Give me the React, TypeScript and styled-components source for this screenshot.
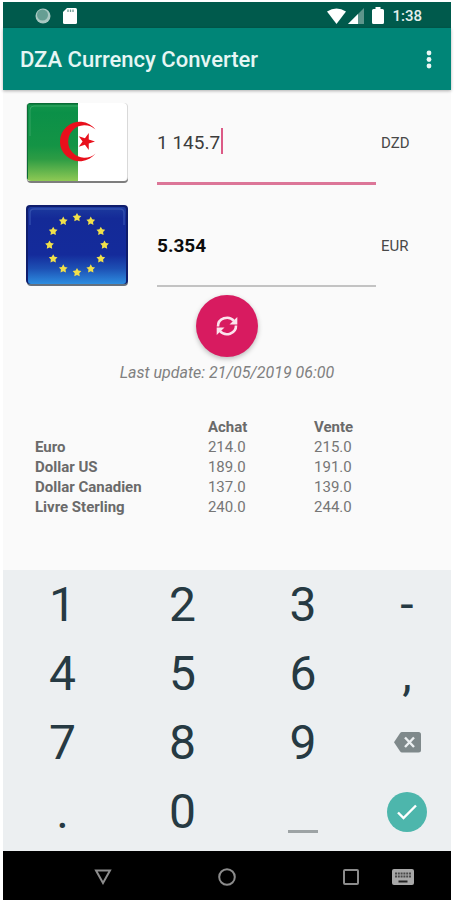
import React, { useState } from "react";
import styled, { createGlobalStyle } from "styled-components";

const GlobalStyle = createGlobalStyle`
  *, *::before, *::after { box-sizing: border-box; }
  html, body, #root { height: 100%; }
  body {
    margin: 0;
    background: #ffffff;
    font-family: Roboto, "Liberation Sans", sans-serif;
  }
  button, input { font-family: inherit; }
`;

const Screen = styled.div`
  display: flex;
  flex-direction: column;
  min-height: 100%;
  padding: 2px 3px 0;
`;

const StatusBar = styled.div`
  display: flex;
  align-items: center;
  justify-content: space-between;
  height: 26px;
  padding: 1px 29px 0 32px;
  background: #005a4c;
  color: #e3efed;
  font-size: 15px;
  font-weight: 500;
`;

const StatusGroup = styled.div<{ $gap: number }>`
  display: flex;
  align-items: center;
  gap: ${(p) => p.$gap}px;
`;

const AppBar = styled.header`
  display: flex;
  align-items: center;
  justify-content: space-between;
  height: 62px;
  padding: 2px 10px 0 17px;
  background: #008577;
  box-shadow: 0 1px 3px rgba(0, 0, 0, 0.3);
  z-index: 1;
`;

const Title = styled.h1`
  margin: 0;
  color: #e6f6f4;
  font-size: 22px;
  font-weight: 500;
  line-height: 28px;
`;

const IconButton = styled.button`
  display: grid;
  place-items: center;
  padding: 0;
  border: 0;
  background: none;
  cursor: pointer;
`;

const Content = styled.main`
  display: flex;
  flex: 1;
  flex-direction: column;
  align-items: stretch;
  padding: 12px 23px 0;
  background: #fafafa;
`;

const CurrencyRow = styled.div`
  display: grid;
  grid-template-columns: 104px 1fr 48px;
  height: 103px;
  padding-right: 4px;
`;

const Amount = styled.input<{ $result?: boolean }>`
  width: 100%;
  height: 80px;
  padding: 0;
  border: 0;
  outline: 0;
  background: none;
  color: ${(p) => (p.$result ? "#0c0c0c" : "#3c3c3c")};
  font-size: 19px;
  font-weight: ${(p) => (p.$result ? 700 : 400)};
`;

const AmountBox = styled.div<{ $active?: boolean }>`
  position: relative;
  height: ${(p) => (p.$active ? 83 : 82)}px;
  margin-left: 27px;
  border-bottom: ${(p) => (p.$active ? "3px solid #dc7698" : "2px solid #c3c3c3")};
`;

const Caret = styled.span`
  position: absolute;
  top: 26px;
  left: 64px;
  width: 2px;
  height: 26px;
  background: #dc5a86;
`;

const Code = styled.label`
  height: 80px;
  padding-left: 5px;
  color: #484848;
  font-size: 15px;
  line-height: 82px;
`;

const Refresh = styled.button`
  display: grid;
  place-items: center;
  align-self: center;
  width: 62px;
  height: 62px;
  margin-top: -13px;
  padding: 0;
  border: 0;
  border-radius: 50%;
  background: #d81b60;
  box-shadow: 0 2px 5px rgba(0, 0, 0, 0.25);
  cursor: pointer;
`;

const Updated = styled.p`
  margin: 6px 0 0;
  color: #808080;
  font-size: 16px;
  font-style: italic;
  line-height: 20px;
  text-align: center;
`;

const Rates = styled.table`
  width: 100%;
  margin: 33px 0 32px;
  padding-left: 9px;
  border-spacing: 0;
  table-layout: fixed;
  color: #767676;
  font-size: 15px;
  line-height: 20px;
`;

const Cell = styled.td`
  height: 20px;
  padding: 0;
`;

const HeadCell = styled.th<{ $width?: string }>`
  width: ${(p) => p.$width ?? "auto"};
  height: ${(p) => (p.scope === "row" ? 20 : 21)}px;
  padding: 0;
  color: #6a6a6a;
  font-weight: 700;
  text-align: left;
`;

const Keypad = styled.div`
  display: grid;
  grid-template-columns: 119fr 121fr 120fr 88fr;
  grid-auto-rows: 69px;
  padding-bottom: 5px;
  background: #eceff1;
`;

const Key = styled.button`
  display: grid;
  place-items: center;
  padding: 0;
  border: 0;
  background: none;
  color: #263a43;
  font-size: 48px;
  line-height: 69px;
  cursor: pointer;
`;

const SpaceMark = styled.span`
  width: 30px;
  height: 3px;
  margin-top: 40px;
  background: #9da3a5;
`;

const Done = styled.span`
  display: grid;
  place-items: center;
  width: 40px;
  height: 40px;
  border-radius: 50%;
  background: #4db6ac;
`;

const NavBar = styled.nav`
  display: grid;
  grid-template-columns: 38fr 124fr 124fr 36fr 52fr 51fr 23fr;
  align-items: center;
  height: 49px;
  padding-top: 2px;
  background: #000000;
`;

const NavButton = styled(IconButton)<{ $column: number }>`
  grid-column: ${(p) => p.$column};
  height: 47px;
`;

const starPoints = (cx: number, cy: number, r: number, turn = -90, inner = 0.4) =>
  Array.from({ length: 10 }, (_, i) => {
    const a = ((turn + i * 36) * Math.PI) / 180;
    const d = i % 2 ? r * inner : r;
    return `${(cx + d * Math.cos(a)).toFixed(2)},${(cy + d * Math.sin(a)).toFixed(2)}`;
  }).join(" ");

const AlgeriaFlag = () => (
  <svg width="104" height="83" viewBox="0 0 104 83" role="img" aria-label="Algeria">
    <defs>
      <linearGradient id="dzGreen" x1="0" y1="0" x2="0" y2="1">
        <stop offset="0" stopColor="#15984c" />
        <stop offset="0.12" stopColor="#0b9048" />
        <stop offset="0.55" stopColor="#149445" />
        <stop offset="0.72" stopColor="#2d9c44" />
        <stop offset="1" stopColor="#8fc954" />
      </linearGradient>
      <clipPath id="dzClip"><rect x="1" y="1" width="100" height="78" rx="4" /></clipPath>
    </defs>
    <rect x="1" y="3" width="101" height="78" rx="4" fill="#7d7d7d" />
    <rect x="0" y="1" width="102" height="78" rx="4" fill="#d9d9d9" />
    <g clipPath="url(#dzClip)">
      <rect x="1" y="1" width="101" height="78" fill="#ffffff" />
      <rect x="1" y="1" width="51" height="78" fill="url(#dzGreen)" />
      <path d="M4 34V8Q4 4 8 4H52" fill="none" stroke="#6fc08e" strokeWidth="1" opacity="0.4" />
      <path d="M1 1H52V2.500H1Z" fill="#0b6b35" />
      <path d="M1 1H2V79H1Z" fill="#0b6b35" />
    </g>
    <path d="M69.500 27.500A19.800 19.800 0 1 0 69.500 51.500A16.300 16.300 0 1 1 69.500 27.500Z" fill="#e8101c" />
    <polygon points={starPoints(60, 39.5, 9, 0, 0.38)} fill="#e8101c" />
  </svg>
);

const EuropeFlag = () => (
  <svg width="104" height="83" viewBox="0 0 104 83" role="img" aria-label="European Union">
    <defs>
      <linearGradient id="euBlue" x1="0" y1="0" x2="0" y2="1">
        <stop offset="0" stopColor="#1c3a9e" />
        <stop offset="0.15" stopColor="#142a97" />
        <stop offset="0.62" stopColor="#142b9b" />
        <stop offset="0.8" stopColor="#1d50b4" />
        <stop offset="1" stopColor="#2d8de0" />
      </linearGradient>
    </defs>
    <rect x="1" y="2" width="101" height="79" rx="4" fill="#64707e" />
    <rect x="0" y="0" width="102" height="79" rx="4" fill="#0f1d6c" />
    <rect x="2" y="2" width="98" height="77" rx="3" fill="url(#euBlue)" />
    <path d="M4 20V8Q4 4 8 4H94Q98 4 98 8V20" fill="none" stroke="#4a67bf" strokeWidth="1.500" opacity="0.5" />
    {Array.from({ length: 12 }, (_, i) => {
      const a = (i * Math.PI) / 6;
      return (
        <polygon
          key={i}
          points={starPoints(51 + 27.5 * Math.sin(a), 40 - 27.5 * Math.cos(a), 4.6, -90, 0.52)}
          fill="#f1e04a"
        />
      );
    })}
  </svg>
);

const rates = [
  ["Euro", "214.0", "215.0"],
  ["Dollar US", "189.0", "191.0"],
  ["Dollar Canadien", "137.0", "139.0"],
  ["Livre Sterling", "240.0", "244.0"],
];

const BackspaceIcon = () => (
  <svg width="27" height="21" viewBox="0 0 27 21">
    <path d="M8 0H24.500Q27 0 27 2.500V18Q27 20.500 24.500 20.500H8Q6.800 20.500 6 19.300L0 10.250L6 1.200Q6.800 0 8 0Z" fill="#7f898b" />
    <path d="M11 5.500L20 15M20 5.500L11 15" stroke="#eceff1" strokeWidth="2.400" />
  </svg>
);

export default function App() {
  const [amount, setAmount] = useState("1 145.7");
  const type = (c: string) => setAmount((v) => v + c);

  return (
    <>
      <GlobalStyle />
      <Screen>
        <StatusBar>
          <StatusGroup $gap={12}>
            <svg width="16" height="16" viewBox="0 0 16 16">
              <circle cx="8" cy="8" r="7.500" fill="#a9c8c2" />
              <circle cx="7.500" cy="7" r="5.500" fill="#669e93" />
            </svg>
            <svg width="14" height="16" viewBox="0 0 14 16">
              <path d="M4 0H12.500Q14 0 14 1.500V14.500Q14 16 12.500 16H1.500Q0 16 0 14.500V4Z" fill="#ffffff" />
              <path d="M5 1.500V4M7.500 1.500V4M10 1.500V4" stroke="#6f9c94" strokeWidth="1.300" />
            </svg>
          </StatusGroup>
          <StatusGroup $gap={8}>
            <StatusGroup $gap={2}>
              <svg width="19" height="16" viewBox="0 0 19 16">
                <path d="M0 3.500Q9.500 -2.500 19 3.500L9.500 16Z" fill="#ffffff" />
              </svg>
              <svg width="16" height="16" viewBox="0 0 16 16">
                <path d="M16 0V16H0Z" fill="#5d958b" />
                <path d="M10 6V16H0Z" fill="#ffffff" />
              </svg>
            </StatusGroup>
            <svg width="12" height="17" viewBox="0 0 12 17">
              <path d="M3.500 0H8.500V2H10.500Q12 2 12 3.500V15.500Q12 17 10.500 17H1.500Q0 17 0 15.500V3.500Q0 2 1.500 2H3.500Z" fill="#ffffff" />
            </svg>
            <span>1:38</span>
          </StatusGroup>
        </StatusBar>
        <AppBar>
          <Title>DZA Currency Converter</Title>
          <IconButton aria-label="More options">
            <svg width="24" height="24" viewBox="0 0 24 24">
              <circle cx="12" cy="5" r="2.400" fill="#e9f7f5" />
              <circle cx="12" cy="11.500" r="2.400" fill="#e9f7f5" />
              <circle cx="12" cy="18" r="2.400" fill="#e9f7f5" />
            </svg>
          </IconButton>
        </AppBar>
        <Content>
          <CurrencyRow>
            <AlgeriaFlag />
            <AmountBox $active>
              <Amount id="dzd" value={amount} onChange={(e) => setAmount(e.target.value)} />
              <Caret />
            </AmountBox>
            <Code htmlFor="dzd">DZD</Code>
          </CurrencyRow>
          <CurrencyRow>
            <EuropeFlag />
            <AmountBox>
              <Amount id="eur" $result readOnly value="5.354" />
            </AmountBox>
            <Code htmlFor="eur">EUR</Code>
          </CurrencyRow>
          <Refresh aria-label="Refresh rates">
            <svg width="24" height="24" viewBox="0 0 24 24" fill="none" stroke="#fbe4ed" strokeWidth="2.600">
              <path d="M3 12.500A9 8.500 0 0 1 19 7" />
              <path d="M21 11.500A9 8.500 0 0 1 5 17" />
              <path d="M22.300 3V10.500H14.500Z" fill="#fbe4ed" stroke="none" />
              <path d="M1.700 21V13.500H9.500Z" fill="#fbe4ed" stroke="none" />
            </svg>
          </Refresh>
          <Updated>Last update: 21/05/2019 06:00</Updated>
          <Rates>
            <thead>
              <tr>
                <HeadCell $width="44%" aria-label="Currency" />
                <HeadCell $width="27%" scope="col">Achat</HeadCell>
                <HeadCell scope="col">Vente</HeadCell>
              </tr>
            </thead>
            <tbody>
              {rates.map(([name, buy, sell]) => (
                <tr key={name}>
                  <HeadCell scope="row">{name}</HeadCell>
                  <Cell>{buy}</Cell>
                  <Cell>{sell}</Cell>
                </tr>
              ))}
            </tbody>
          </Rates>
        </Content>
        <Keypad>
          {["1", "2", "3", "-", "4", "5", "6", ",", "7", "8", "9"].map((k) => (
            <Key key={k} onClick={() => type(k)}>{k}</Key>
          ))}
          <Key aria-label="Backspace" onClick={() => setAmount((v) => v.slice(0, -1))}>
            <BackspaceIcon />
          </Key>
          <Key onClick={() => type(".")}>.</Key>
          <Key onClick={() => type("0")}>0</Key>
          <Key aria-label="Space" onClick={() => type(" ")}>
            <SpaceMark />
          </Key>
          <Key aria-label="Done">
            <Done>
              <svg width="20" height="16" viewBox="0 0 20 16" fill="none" stroke="#ffffff" strokeWidth="2.400">
                <path d="M1 8.500L6.500 14L19 1.500" />
              </svg>
            </Done>
          </Key>
        </Keypad>
        <NavBar>
          <NavButton $column={2} aria-label="Back">
            <svg width="18" height="16" viewBox="0 0 18 16" fill="none" stroke="#8c8c8c" strokeWidth="2">
              <path d="M2 1.500H16L9 14Z" />
            </svg>
          </NavButton>
          <NavButton $column={3} aria-label="Home">
            <svg width="18" height="18" viewBox="0 0 18 18" fill="none" stroke="#8c8c8c" strokeWidth="2">
              <circle cx="9" cy="9" r="7.800" />
            </svg>
          </NavButton>
          <NavButton $column={5} aria-label="Recent apps">
            <svg width="16" height="16" viewBox="0 0 16 16" fill="none" stroke="#8c8c8c" strokeWidth="2">
              <rect x="1" y="1" width="14" height="14" rx="1" />
            </svg>
          </NavButton>
          <NavButton $column={6} aria-label="Switch keyboard">
            <svg width="22" height="16" viewBox="0 0 22 16">
              <rect width="22" height="16" rx="2" fill="#a8a8a8" />
              <path d="M3 4.500H19M3 7.500H19" stroke="#4a4a4a" strokeWidth="2" strokeDasharray="2 0.800" />
              <path d="M6.500 12.500H15.500" stroke="#222222" strokeWidth="2" />
            </svg>
          </NavButton>
        </NavBar>
      </Screen>
    </>
  );
}
